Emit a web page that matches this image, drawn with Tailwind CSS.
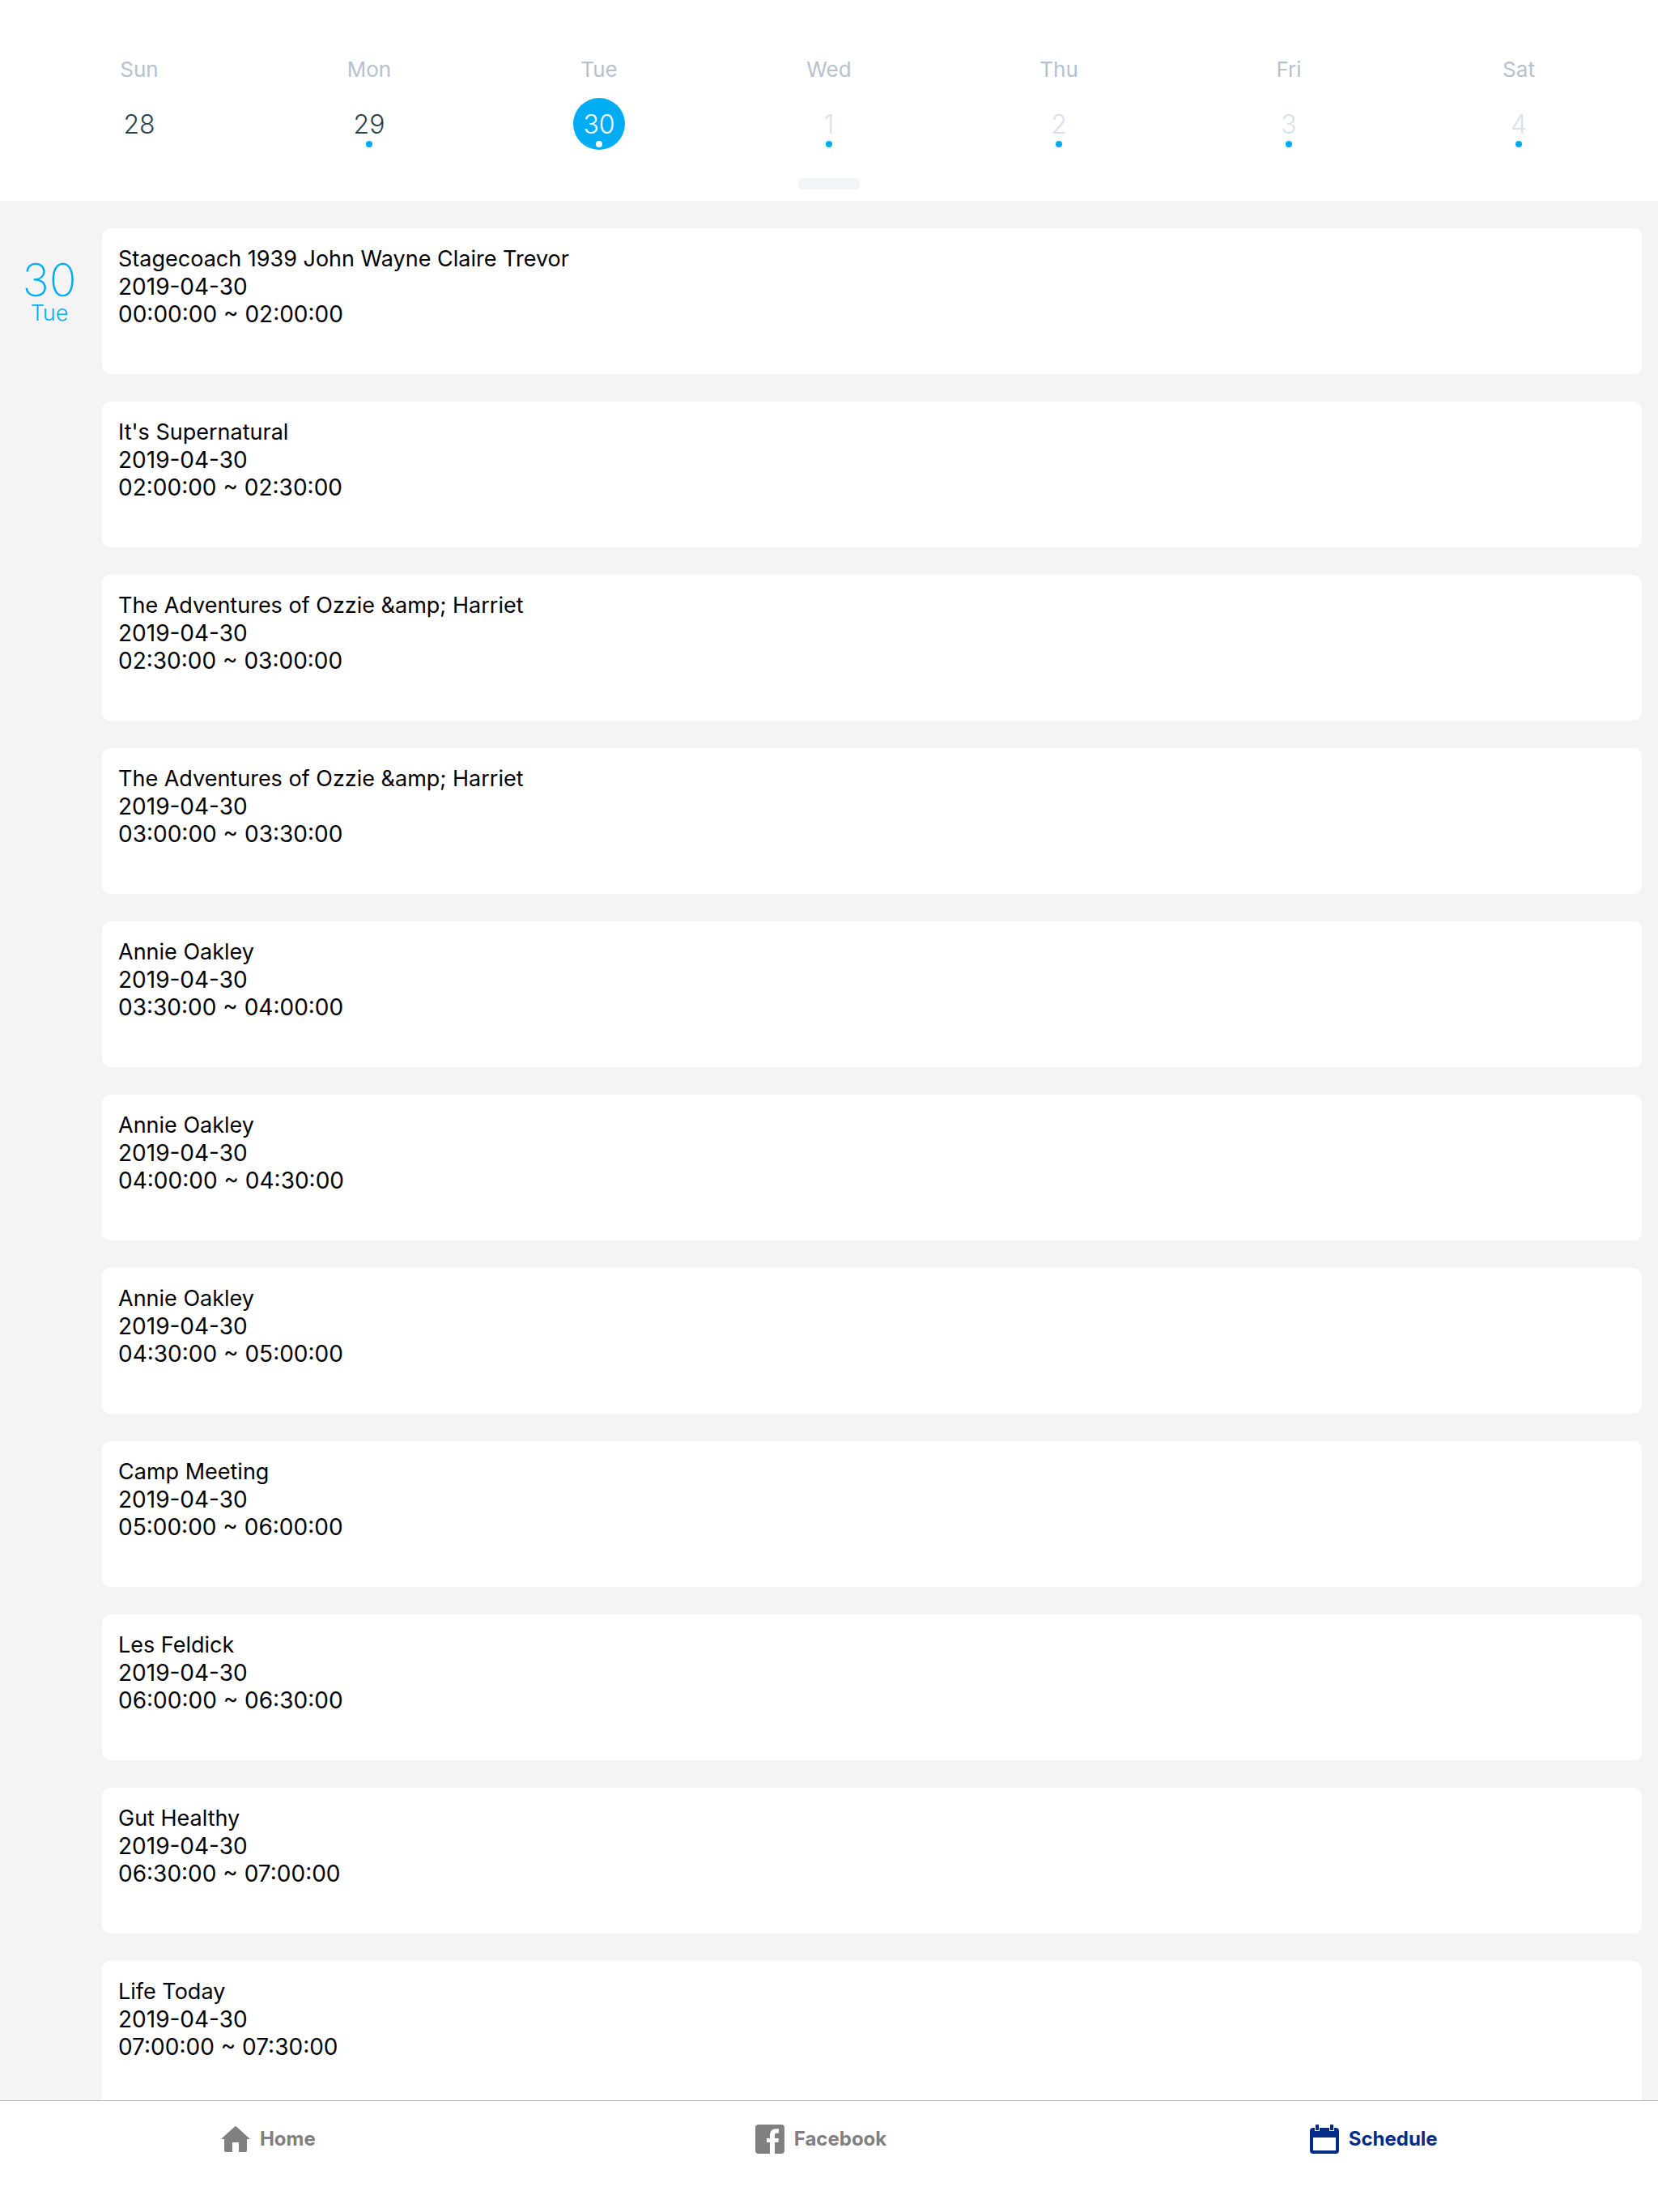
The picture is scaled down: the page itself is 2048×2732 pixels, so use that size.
<!DOCTYPE html>
<html lang="en">
<head>
<meta charset="utf-8">
<meta name="viewport" content="width=device-width, initial-scale=1">
<title>Schedule</title>
<script src="https://cdn.jsdelivr.net/npm/@tailwindcss/browser@4"></script>
</head>
<body class="flex h-screen flex-col bg-[#f4f4f4] font-['Inter',sans-serif] text-black">
  <header class="shrink-0 bg-white px-[30px] pt-[70px] pb-[14px]">
    <div class="grid grid-cols-7 text-center text-[26px] leading-8 text-[#b6c1cd]">
      <span>Sun</span><span>Mon</span><span>Tue</span><span>Wed</span><span>Thu</span><span>Fri</span><span>Sat</span>
    </div>
    <div class="mt-[19px] grid grid-cols-7 justify-items-center text-[32px] leading-10 font-light text-[#2d4150]">
      <button class="flex size-16 flex-col items-center rounded-full pt-[13px]">28</button>
      <button class="flex size-16 flex-col items-center rounded-full pt-[13px]">29<span class="size-2 rounded-full bg-[#00adf5]"></span></button>
      <button class="flex size-16 flex-col items-center rounded-full bg-[#00adf5] pt-[13px] text-white">30<span class="size-2 rounded-full bg-white"></span></button>
      <button class="flex size-16 flex-col items-center rounded-full pt-[13px] text-[#d9e1e8]">1<span class="size-2 rounded-full bg-[#00adf5]"></span></button>
      <button class="flex size-16 flex-col items-center rounded-full pt-[13px] text-[#d9e1e8]">2<span class="size-2 rounded-full bg-[#00adf5]"></span></button>
      <button class="flex size-16 flex-col items-center rounded-full pt-[13px] text-[#d9e1e8]">3<span class="size-2 rounded-full bg-[#00adf5]"></span></button>
      <button class="flex size-16 flex-col items-center rounded-full pt-[13px] text-[#d9e1e8]">4<span class="size-2 rounded-full bg-[#00adf5]"></span></button>
    </div>
    <div class="mx-auto mt-[35px] h-[14px] w-[76px] rounded-md bg-[#f2f4f5]"></div>
  </header>

  <main class="flex min-h-0 flex-1 overflow-hidden pt-[34px] pr-5">
    <div class="flex w-[126px] shrink-0 flex-col items-center pt-10 pr-1 text-[#00adf5]">
      <span class="text-[56px] leading-[48px] font-extralight">30</span>
      <span class="text-[27px] leading-[34px] font-light">Tue</span>
    </div>
    <div class="flex min-w-0 flex-1 flex-col gap-[34px] text-[28px] leading-[34px]">
      <article class="h-[180px] shrink-0 rounded-[10px] bg-white px-5 pt-[21px]"><h2 class="text-[27px]">Stagecoach 1939 John Wayne Claire Trevor</h2><p>2019-04-30</p><p>00:00:00 ~ 02:00:00</p></article>
      <article class="h-[180px] shrink-0 rounded-[10px] bg-white px-5 pt-[21px]"><h2 class="text-[27px]">It's Supernatural</h2><p>2019-04-30</p><p>02:00:00 ~ 02:30:00</p></article>
      <article class="h-[180px] shrink-0 rounded-[10px] bg-white px-5 pt-[21px]"><h2 class="text-[27px]">The Adventures of Ozzie &amp;amp; Harriet</h2><p>2019-04-30</p><p>02:30:00 ~ 03:00:00</p></article>
      <article class="h-[180px] shrink-0 rounded-[10px] bg-white px-5 pt-[21px]"><h2 class="text-[27px]">The Adventures of Ozzie &amp;amp; Harriet</h2><p>2019-04-30</p><p>03:00:00 ~ 03:30:00</p></article>
      <article class="h-[180px] shrink-0 rounded-[10px] bg-white px-5 pt-[21px]"><h2 class="text-[27px]">Annie Oakley</h2><p>2019-04-30</p><p>03:30:00 ~ 04:00:00</p></article>
      <article class="h-[180px] shrink-0 rounded-[10px] bg-white px-5 pt-[21px]"><h2 class="text-[27px]">Annie Oakley</h2><p>2019-04-30</p><p>04:00:00 ~ 04:30:00</p></article>
      <article class="h-[180px] shrink-0 rounded-[10px] bg-white px-5 pt-[21px]"><h2 class="text-[27px]">Annie Oakley</h2><p>2019-04-30</p><p>04:30:00 ~ 05:00:00</p></article>
      <article class="h-[180px] shrink-0 rounded-[10px] bg-white px-5 pt-[21px]"><h2 class="text-[27px]">Camp Meeting</h2><p>2019-04-30</p><p>05:00:00 ~ 06:00:00</p></article>
      <article class="h-[180px] shrink-0 rounded-[10px] bg-white px-5 pt-[21px]"><h2 class="text-[27px]">Les Feldick</h2><p>2019-04-30</p><p>06:00:00 ~ 06:30:00</p></article>
      <article class="h-[180px] shrink-0 rounded-[10px] bg-white px-5 pt-[21px]"><h2 class="text-[27px]">Gut Healthy</h2><p>2019-04-30</p><p>06:30:00 ~ 07:00:00</p></article>
      <article class="h-[180px] shrink-0 rounded-[10px] bg-white px-5 pt-[21px]"><h2 class="text-[27px]">Life Today</h2><p>2019-04-30</p><p>07:00:00 ~ 07:30:00</p></article>
    </div>
  </main>

  <nav class="grid shrink-0 grid-cols-3 border-t border-[#b2b2b2] bg-white pb-[43px] text-2xl font-bold text-[#808080]">
    <a href="#home" class="flex h-[94px] items-center justify-center gap-3 pr-5">
      <svg class="size-9" viewBox="0 0 36 36" fill="currentColor" aria-hidden="true"><path d="M14 34V22h8v12h8a2 2 0 0 0 2-2V18h4L19 2.400a1.500 1.500 0 0 0-2 0L0 18h4v14a2 2 0 0 0 2 2z"/></svg>
      Home
    </a>
    <a href="#facebook" class="flex h-[94px] items-center justify-center gap-3 pr-5">
      <svg class="size-9" viewBox="0 0 36 36" fill="currentColor" aria-hidden="true"><path d="M32 0H4a4 4 0 0 0-4 4v28a4 4 0 0 0 4 4h14V22h-4v-5h4v-3.200C18 8.500 20.500 5.300 25.500 5.300H29V10.500h-2.500c-2 0-2.500 1-2.500 2.700V17h5l-.7 5H24v14h8a4 4 0 0 0 4-4V4a4 4 0 0 0-4-4z"/></svg>
      Facebook
    </a>
    <a href="#schedule" aria-current="page" class="flex h-[94px] items-center justify-center gap-3 pr-5 text-[#042c86]">
      <svg class="size-9" viewBox="0 0 36 36" fill="currentColor" aria-hidden="true"><path d="M7 0h4v7H7zM25 0h4v7h-4z"/><path fill-rule="evenodd" d="M4 4h2v4h6V4h12v4h6V4h2a4 4 0 0 1 4 4v24a4 4 0 0 1-4 4H4a4 4 0 0 1-4-4V8a4 4 0 0 1 4-4zM4 16v16h28V16z"/></svg>
      Schedule
    </a>
  </nav>
</body>
</html>
